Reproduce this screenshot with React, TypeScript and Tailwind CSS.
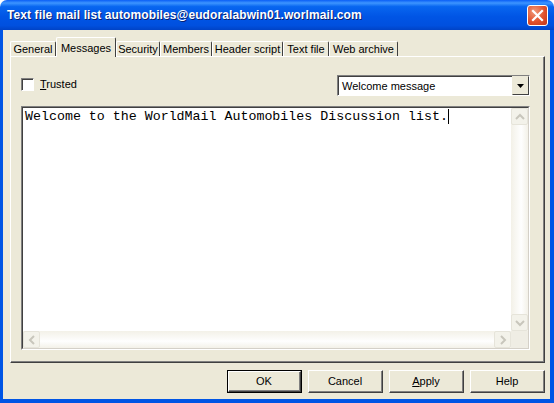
import React from "react";

const tabs = [
  { label: "General", w: "w-[46px]" },
  { label: "Messages", w: "w-[60px]", active: true },
  { label: "Security", w: "w-[44px]" },
  { label: "Members", w: "w-[52px]" },
  { label: "Header script", w: "w-[71px]" },
  { label: "Text file", w: "w-[46px]" },
  { label: "Web archive", w: "w-[69px]" },
];

function Chevron({ dir }: { dir: "up" | "down" | "left" | "right" }) {
  const d = {
    up: "M3 9 L7 5 L11 9",
    down: "M3 5 L7 9 L11 5",
    left: "M9 3 L5 7 L9 11",
    right: "M5 3 L9 7 L5 11",
  }[dir];
  return (
    <svg width="14" height="14" viewBox="0 0 14 14">
      <path d={d} fill="none" stroke="#c8c6bc" strokeWidth="2" />
    </svg>
  );
}

function ScrollBtn({ dir }: { dir: "up" | "down" | "left" | "right" }) {
  return (
    <div className="w-[17px] h-[17px] flex items-center justify-center rounded-[2px] border border-[#e6e4da] bg-[#f3f2ea]">
      <Chevron dir={dir} />
    </div>
  );
}

function Button({ label, def, u }: { label: string; def?: boolean; u?: boolean }) {
  return (
    <div className={`w-[75px] h-[23px] ${def ? "border border-black" : ""}`}>
      <div className="w-full h-full border-t border-l border-white border-r border-b border-r-[#404040] border-b-[#404040]">
        <div className="w-full h-full flex items-center justify-center border-r border-b border-[#808080] text-[11px] text-black">
          {u ? (
            <span>
              <span className="underline">A</span>pply
            </span>
          ) : (
            label
          )}
        </div>
      </div>
    </div>
  );
}

export default function App() {
  return (
    <div className="w-[554px] h-[403px] flex flex-col overflow-hidden font-['Liberation_Sans',Arial,sans-serif]">
      {/* title bar */}
      <div className="h-[30px] flex items-center justify-between pl-[7px] pr-[6px] rounded-t-[7px] bg-[linear-gradient(180deg,#0a5ef6_0%,#3d95ff_10%,#0866f0_22%,#0055e5_55%,#0050df_85%,#0043c6_100%)]">
        <span className="text-white font-bold text-[12px] tracking-[0.1px] [text-shadow:1px_1px_0_#0a1f6e]">
          Text file mail list automobiles@eudoralabwin01.worlmail.com
        </span>
        <div className="w-[21px] h-[21px] rounded-[3px] border border-white flex items-center justify-center bg-[radial-gradient(circle_at_35%_30%,#f09a7a_0%,#e1512c_55%,#c1361a_100%)]">
          <svg width="13" height="13" viewBox="0 0 13 13">
            <path d="M2 2 L11 11 M11 2 L2 11" stroke="white" strokeWidth="2.2" strokeLinecap="square" />
          </svg>
        </div>
      </div>

      {/* client */}
      <div className="flex-1 flex flex-col bg-[#0055e5] pl-[3px] pr-[4px] pb-[4px]">
        <div className="flex-1 flex flex-col bg-[#ece9d8] pt-[7px] pl-[7px] pr-[5px]">
          {/* tabs */}
          <div className="flex items-end h-[19px] relative z-10">
            {tabs.map((t) =>
              t.active ? (
                <div
                  key={t.label}
                  className={`${t.w} h-[20px] -mb-[1px] bg-[#ece9d8] border-t border-l border-white border-r border-r-[#404040] rounded-t-[2px] flex items-start justify-center pt-[2px] whitespace-nowrap text-[11px] text-black`}
                >
                  {t.label}
                </div>
              ) : (
                <div
                  key={t.label}
                  className={`${t.w} h-[15px] bg-[#ece9d8] border-t border-l border-white border-r border-r-[#404040] rounded-t-[2px] flex items-center justify-center whitespace-nowrap text-[11px] text-black`}
                >
                  {t.label}
                </div>
              )
            )}
          </div>

          {/* panel */}
          <div className="h-[307px] border-t border-l border-white border-r border-b border-r-[#404040] border-b-[#404040]">
            <div className="w-full h-full border-r border-b border-[#808080] flex flex-col pl-[10px] pr-[13px] pt-[18px]">
              <div className="flex items-start justify-between h-[21px]">
                <div className="flex items-center gap-[6px] mt-[1px]">
                  <div className="w-[13px] h-[13px] bg-white border-t border-l border-[#808080] border-r border-b border-r-white border-b-white shadow-[inset_1px_1px_0_#404040]" />
                  <span className="text-[11px] text-black">
                    <span className="underline">T</span>rusted
                  </span>
                </div>
                <div className="w-[193px] h-[21px] bg-white border-t border-l border-[#808080] border-r border-b border-r-white border-b-white flex">
                  <div className="flex-1 flex items-center pl-[3px] border-t border-l border-[#404040] text-[11px] text-black">
                    Welcome message
                  </div>
                  <div className="w-[17px] h-full border-t border-l border-[#ece9d8] bg-[#ece9d8] flex items-center justify-center border-r border-b border-r-[#404040] border-b-[#404040]">
                    <svg width="7" height="4" viewBox="0 0 7 4">
                      <path d="M0 0 H7 L3.5 4 Z" fill="black" />
                    </svg>
                  </div>
                </div>
              </div>

              {/* text area */}
              <div className="mt-[10px] h-[244px] border-t border-l border-[#808080] border-r border-b border-r-white border-b-white">
                <div className="w-full h-full border-t border-l border-[#404040] border-r border-b border-r-[#d4d0c8] border-b-[#d4d0c8] bg-white grid grid-cols-[1fr_17px] grid-rows-[1fr_17px]">
                  <div className="pl-[2px] pt-[1px] font-['Liberation_Mono','Courier_New',monospace] text-[13.3px] leading-[16px] text-black">
                    Welcome to the WorldMail Automobiles Discussion list.
                    <span className="inline-block w-px h-[15px] bg-black align-middle" />
                  </div>
                  <div className="flex flex-col justify-between bg-[linear-gradient(90deg,#f3f1e8,#fefefe_60%,#f3f1e8)]">
                    <ScrollBtn dir="up" />
                    <ScrollBtn dir="down" />
                  </div>
                  <div className="flex justify-between bg-[linear-gradient(180deg,#f3f1e8,#fefefe_60%,#f3f1e8)]">
                    <ScrollBtn dir="left" />
                    <ScrollBtn dir="right" />
                  </div>
                  <div className="bg-[#efede4]" />
                </div>
              </div>
            </div>
          </div>

          {/* buttons */}
          <div className="flex justify-end gap-[6px] pt-[7px] pr-0">
            <Button label="OK" def />
            <Button label="Cancel" />
            <Button label="Apply" u />
            <Button label="Help" />
          </div>
        </div>
      </div>
    </div>
  );
}
